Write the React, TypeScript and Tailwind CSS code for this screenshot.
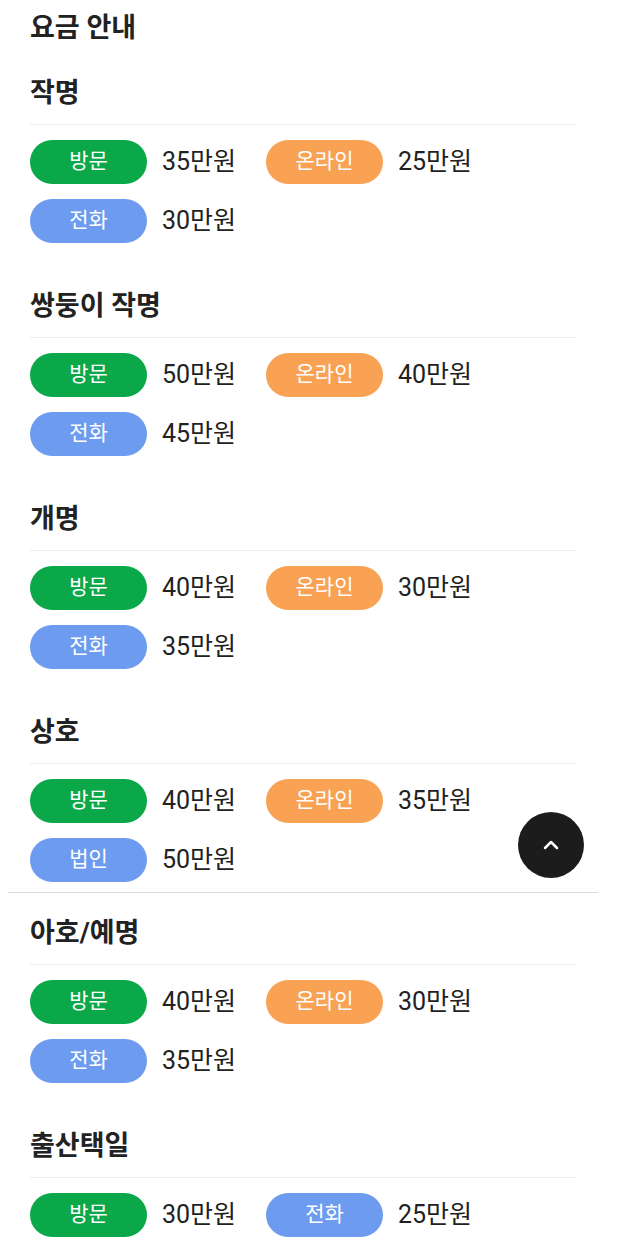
import { ChevronUp } from "lucide-react";

type Kind = "visit" | "online" | "phone" | "corp";

const pill: Record<Kind, { label: string; cls: string }> = {
  visit: { label: "방문", cls: "bg-[#0ba84a]" },
  online: { label: "온라인", cls: "bg-[#f9a253]" },
  phone: { label: "전화", cls: "bg-[#6d9bef]" },
  corp: { label: "법인", cls: "bg-[#6d9bef]" },
};

const groups: { title: string; prices: [Kind, string][] }[][] = [
  [
    { title: "작명", prices: [["visit", "35만원"], ["online", "25만원"], ["phone", "30만원"]] },
    { title: "쌍둥이 작명", prices: [["visit", "50만원"], ["online", "40만원"], ["phone", "45만원"]] },
    { title: "개명", prices: [["visit", "40만원"], ["online", "30만원"], ["phone", "35만원"]] },
    { title: "상호", prices: [["visit", "40만원"], ["online", "35만원"], ["corp", "50만원"]] },
  ],
  [
    { title: "아호/예명", prices: [["visit", "40만원"], ["online", "30만원"], ["phone", "35만원"]] },
    { title: "출산택일", prices: [["visit", "30만원"], ["phone", "25만원"]] },
  ],
];

function Section({ title, prices, last }: { title: string; prices: [Kind, string][]; last: boolean }) {
  return (
    <section className={last ? "" : "mb-[45px]"}>
      <h3 className="pt-[2px] text-[27px] leading-[32px] font-bold text-[#222]">{title}</h3>
      <div className="mt-[15px] border-t border-[#ececec] pt-[15px] flex flex-wrap gap-y-[15px]">
        {prices.map(([k, price]) => (
          <div key={k} className="w-[236px] flex items-center gap-[15px]">
            <span
              className={`w-[117px] h-[44px] rounded-full flex items-center justify-center text-white text-[21px] ${pill[k].cls}`}
            >
              {pill[k].label}
            </span>
            <span className="text-[25px] text-[#222]">{price}</span>
          </div>
        ))}
      </div>
    </section>
  );
}

export default function App() {
  return (
    <div
      className="relative w-[618px] h-[1246px] overflow-hidden bg-white"
      style={{ fontFamily: 'Roboto, "Noto Sans CJK KR", sans-serif' }}
    >
      <div className="ml-2 mr-5">
        <div className="px-[22px] pt-[10px]">
          <h2 className="text-[27px] leading-[36px] font-bold text-[#222] mb-[29px]">요금 안내</h2>
          {groups[0].map((s, i) => (
            <Section key={s.title} {...s} last={i === groups[0].length - 1} />
          ))}
        </div>
        <div className="mt-[10px] border-t border-[#dcdcdc] px-[22px] pt-[22px]">
          {groups[1].map((s, i) => (
            <Section key={s.title} {...s} last={i === groups[1].length - 1} />
          ))}
        </div>
      </div>

      <button className="absolute left-[518px] top-[812px] w-[66px] h-[66px] rounded-full bg-[#1c1c1c] flex items-center justify-center">
        <ChevronUp className="w-6 h-6 text-white" strokeWidth={2.5} />
      </button>
    </div>
  );
}
